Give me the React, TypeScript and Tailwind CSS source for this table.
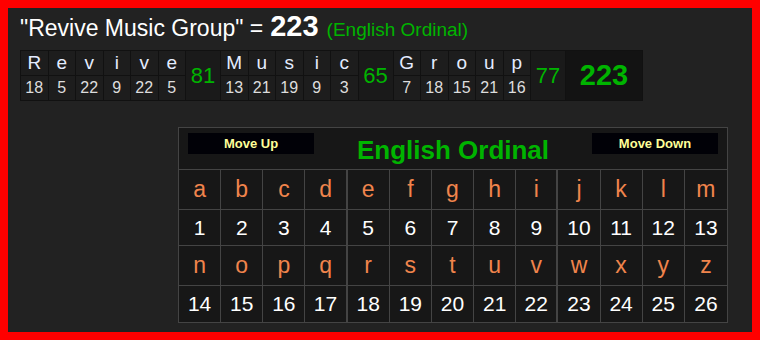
import React from "react";

const words = [
  { letters: "Revive", total: 81 },
  { letters: "Music", total: 65 },
  { letters: "Group", total: 77 },
];

const ordinal = (c: string) => c.toLowerCase().charCodeAt(0) - 96;

const alphabet = "abcdefghijklmnopqrstuvwxyz".split("");
const rows = [alphabet.slice(0, 13), alphabet.slice(13)];

function WordTable() {
  return (
    <div className="flex w-fit border border-[#111] bg-[#1d1d1d]">
      {words.map((w) => (
        <React.Fragment key={w.letters}>
          {w.letters.split("").map((c, i) => (
            <div key={i} className="flex w-[27.5px] flex-col border-r border-[#111]">
              <div className="flex h-[25px] items-center justify-center border-b border-[#111] text-[19px] text-[#e4ecff]">
                {c}
              </div>
              <div className="flex h-[24px] items-center justify-center text-[16px] text-[#ddd]">
                {ordinal(c)}
              </div>
            </div>
          ))}
          <div className="flex w-[35px] items-center justify-center border-r border-[#111] bg-[#1a1a1a] text-[22px] text-[#00b400]">
            {w.total}
          </div>
        </React.Fragment>
      ))}
      <div className="flex w-[76px] items-center justify-center bg-[#131313] text-[29px] font-bold text-[#00b400]">
        223
      </div>
    </div>
  );
}

function CipherPanel() {
  return (
    <div className="ml-[158px] mt-[26px] w-[550px] border border-[#444] bg-[#171717]">
      <div className="flex h-[42px] items-start justify-between border-b border-[#444] px-[9px] pt-[5px]">
        <button className="h-[21px] w-[126px] bg-[#010107] text-[13px] font-bold text-[#ffff99]">
          Move Up
        </button>
        <div className="self-center pb-[3px] text-[26px] font-bold leading-none text-[#00b400]">
          English Ordinal
        </div>
        <button className="h-[21px] w-[126px] bg-[#010107] text-[13px] font-bold text-[#ffff99]">
          Move Down
        </button>
      </div>
      {rows.map((row, r) => (
        <React.Fragment key={r}>
          <div className="grid grid-cols-[repeat(13,minmax(0,1fr))]">
            {row.map((c, i) => (
              <div
                key={c}
                className={`flex h-[40px] items-center justify-center border-b border-[#444] text-[23px] text-[#f0844c] ${
                  i === 12 ? "" : i === 3 || i === 8 ? "border-r-2" : "border-r"
                }`}
              >
                {c}
              </div>
            ))}
          </div>
          <div className="grid grid-cols-[repeat(13,minmax(0,1fr))]">
            {row.map((c, i) => (
              <div
                key={c}
                className={`flex h-[36px] items-center justify-center border-[#444] text-[21px] text-white ${
                  r === 0 ? "border-b" : ""
                } ${i === 12 ? "" : i === 3 || i === 8 ? "border-r-2" : "border-r"}`}
              >
                {ordinal(c)}
              </div>
            ))}
          </div>
        </React.Fragment>
      ))}
    </div>
  );
}

export default function App() {
  return (
    <div className="h-[340px] w-[760px] bg-[#ff0000] p-2" style={{ fontFamily: '"Liberation Sans", Arial, sans-serif' }}>
      <div className="h-full bg-[#222] px-3 pt-[4px]">
        <div className="flex h-[38px] items-baseline whitespace-nowrap leading-none">
          <span className="text-[23px] text-white">"Revive Music Group" = </span>
          <span className="ml-[7px] text-[29px] font-bold text-white">223</span>
          <span className="ml-[8px] text-[19px] text-[#00b400]">(English Ordinal)</span>
        </div>
        <WordTable />
        <CipherPanel />
      </div>
    </div>
  );
}
